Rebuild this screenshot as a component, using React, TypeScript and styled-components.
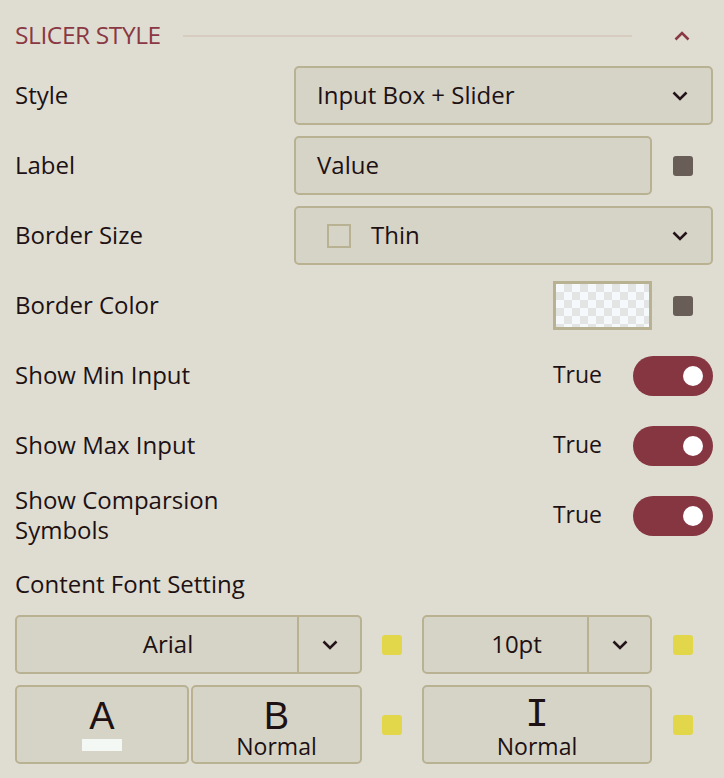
import React from 'react';
import styled, { createGlobalStyle } from 'styled-components';

const GlobalStyle = createGlobalStyle`
    html, body {
        margin: 0;
        padding: 0;
        background: #dfddd1;
    }
    body {
        font-family: "Open Sans", "Noto Sans", sans-serif;
        color: #1d1113;
    }
`;

const ChevronDown = () => (
    <svg width="16" height="10" viewBox="0 0 16 10">
        <path d="M1.5 1.5 L8 8 L14.5 1.5" fill="none" stroke="#24141a" strokeWidth="2.6" />
    </svg>
);

const ChevronUp = () => (
    <svg width="16" height="10" viewBox="0 0 16 10">
        <path d="M1.5 8.5 L8 2 L14.5 8.5" fill="none" stroke="#8a3843" strokeWidth="2.6" />
    </svg>
);

const Toggle = ({ on }: { on: boolean }) => (
    <ToggleTrack on={on}>
        <ToggleKnob />
    </ToggleTrack>
);

const App = () => {
    return (
        <>
            <GlobalStyle />
            <Panel>
                <Header>
                    <Title>SLICER STYLE</Title>
                    <Rule />
                    <CollapseButton>
                        <ChevronUp />
                    </CollapseButton>
                </Header>

                <Rows>
                    <Row>
                        <Label>Style</Label>
                        <Controls>
                            <Select>
                                <SelectValue>Input Box + Slider</SelectValue>
                                <ChevronDown />
                            </Select>
                        </Controls>
                    </Row>

                    <Row>
                        <Label>Label</Label>
                        <Controls>
                            <TextInput>Value</TextInput>
                            <SideSlot>
                                <ColorDot color="#695d57" />
                            </SideSlot>
                        </Controls>
                    </Row>

                    <Row>
                        <Label>Border Size</Label>
                        <Controls>
                            <Select>
                                <SelectValue>
                                    <BorderSample />
                                    Thin
                                </SelectValue>
                                <ChevronDown />
                            </Select>
                        </Controls>
                    </Row>

                    <Row>
                        <Label>Border Color</Label>
                        <Controls>
                            <Swatch />
                            <SideSlot>
                                <ColorDot color="#695d57" />
                            </SideSlot>
                        </Controls>
                    </Row>

                    <Row>
                        <Label>Show Min Input</Label>
                        <Controls>
                            <SwitchGroup>
                                <SwitchText>True</SwitchText>
                                <Toggle on />
                            </SwitchGroup>
                        </Controls>
                    </Row>

                    <Row>
                        <Label>Show Max Input</Label>
                        <Controls>
                            <SwitchGroup>
                                <SwitchText>True</SwitchText>
                                <Toggle on />
                            </SwitchGroup>
                        </Controls>
                    </Row>

                    <Row>
                        <Label>Show Comparsion Symbols</Label>
                        <Controls>
                            <SwitchGroup>
                                <SwitchText>True</SwitchText>
                                <Toggle on />
                            </SwitchGroup>
                        </Controls>
                    </Row>

                    <SectionLabel>Content Font Setting</SectionLabel>

                    <FontGrid>
                        <Combo>
                            <ComboValue>Arial</ComboValue>
                            <ComboArrow>
                                <ChevronDown />
                            </ComboArrow>
                        </Combo>
                        <DotSlot>
                            <ColorDot color="#e2d64a" />
                        </DotSlot>
                        <Combo>
                            <ComboValue>10pt</ComboValue>
                            <ComboArrow>
                                <ChevronDown />
                            </ComboArrow>
                        </Combo>
                        <DotSlot>
                            <ColorDot color="#e2d64a" />
                        </DotSlot>

                        <StylePair>
                            <StyleButton>
                                <Glyph>A</Glyph>
                                <ColorBar color="#f3f8f5" />
                            </StyleButton>
                            <StyleButton>
                                <Glyph>B</Glyph>
                                <StyleCaption>Normal</StyleCaption>
                            </StyleButton>
                        </StylePair>
                        <DotSlot>
                            <ColorDot color="#e2d64a" />
                        </DotSlot>
                        <StyleButton>
                            <Glyph serif>I</Glyph>
                            <StyleCaption>Normal</StyleCaption>
                        </StyleButton>
                        <DotSlot>
                            <ColorDot color="#e2d64a" />
                        </DotSlot>
                    </FontGrid>
                </Rows>
            </Panel>
        </>
    );
};

export default App;

const Panel = styled.div`
    width: 724px;
    min-height: 778px;
    box-sizing: border-box;
    padding: 5px 11px 0 15px;
    background: #dfddd1;
    font-size: 24px;
`;

const Header = styled.div`
    display: flex;
    align-items: center;
    height: 61px;
`;

const Title = styled.div`
    font-size: 24.5px;
    color: #8a3843;
    letter-spacing: -0.4px;
    white-space: nowrap;
    line-height: 1;
`;

const Rule = styled.div`
    flex: 1;
    height: 2px;
    background: #d6cdc0;
    margin: 0 35px 0 22px;
`;

const CollapseButton = styled.div`
    width: 30px;
    height: 30px;
    display: flex;
    align-items: center;
    justify-content: center;
    margin-right: 16px;
`;

const Rows = styled.div`
    display: flex;
    flex-direction: column;
    gap: 11px;
`;

const Row = styled.div`
    display: grid;
    grid-template-columns: 279px 1fr;
    align-items: center;
    min-height: 59px;
`;

const Label = styled.div`
    line-height: 30px;
    padding-right: 20px;
    margin-top: -2px;
`;

const SectionLabel = styled.div`
    height: 48px;
    box-sizing: border-box;
    padding-top: 8px;
    display: flex;
    align-items: center;
    line-height: 30px;
`;

const Controls = styled.div`
    display: flex;
    align-items: center;
    justify-content: flex-end;
    height: 59px;
`;

const boxBase = `
    box-sizing: border-box;
    height: 59px;
    border: 2px solid #b8b293;
    border-radius: 5px;
    background: #d6d4c7;
`;

const Select = styled.div`
    ${boxBase}
    flex: 1;
    display: flex;
    align-items: center;
    justify-content: space-between;
    padding: 0 23px 0 21px;
`;

const SelectValue = styled.div`
    display: flex;
    align-items: center;
    margin-top: -2px;
`;

const BorderSample = styled.span`
    box-sizing: border-box;
    width: 24px;
    height: 24px;
    border: 2px solid #b8b293;
    margin: 2px 20px 0 10px;
`;

const TextInput = styled.div`
    ${boxBase}
    flex: 1;
    display: flex;
    align-items: center;
    padding: 0 0 2px 21px;
`;

const SideSlot = styled.div`
    width: 61px;
    display: flex;
    justify-content: center;
`;

const ColorDot = styled.span<{ color: string }>`
    display: block;
    width: 20px;
    height: 20px;
    border-radius: 3px;
    background: ${props => props.color};
`;

const Swatch = styled.div`
    box-sizing: border-box;
    width: 99px;
    height: 49px;
    border: 3px solid #b8b293;
    background-color: #f6f9fb;
    background-image: repeating-conic-gradient(#e2e5e4 0% 25%, #f6f9fb 0% 50%);
    background-size: 16px 16px;
`;

const SwitchGroup = styled.div`
    display: flex;
    align-items: center;
    gap: 31px;
`;

const SwitchText = styled.span`
    font-size: 23px;
    margin-top: -3px;
`;

const ToggleTrack = styled.div<{ on: boolean }>`
    width: 80px;
    height: 40px;
    border-radius: 20px;
    background: ${props => (props.on ? '#853641' : '#b8b293')};
    display: flex;
    align-items: center;
    justify-content: ${props => (props.on ? 'flex-end' : 'flex-start')};
    padding: 0 10px;
    box-sizing: border-box;
`;

const ToggleKnob = styled.span`
    width: 20px;
    height: 20px;
    border-radius: 50%;
    background: #ffffff;
`;

const FontGrid = styled.div`
    display: grid;
    grid-template-columns: 347px 60px 230px 61px;
    grid-template-rows: 59px 79px;
    row-gap: 11px;
    align-items: center;
`;

const Combo = styled.div`
    ${boxBase}
    display: flex;
    align-items: stretch;
`;

const ComboValue = styled.div`
    flex: 1;
    display: flex;
    align-items: center;
    justify-content: center;
    padding: 0 0 2px 22px;
`;

const ComboArrow = styled.div`
    width: 61px;
    border-left: 2px solid #b8b293;
    display: flex;
    align-items: center;
    justify-content: center;
`;

const DotSlot = styled.div`
    display: flex;
    justify-content: center;
`;

const StylePair = styled.div`
    display: grid;
    grid-template-columns: 174px 1fr;
    gap: 2px;
    height: 79px;
`;

const StyleButton = styled.div`
    ${boxBase}
    height: 79px;
    display: flex;
    flex-direction: column;
    align-items: center;
    padding-top: 11px;
`;

const Glyph = styled.div<{ serif?: boolean }>`
    font-family: ${props => (props.serif ? '"Liberation Mono", monospace' : '"Liberation Sans", Arial, sans-serif')};
    font-size: ${props => (props.serif ? '40px' : '38px')};
    line-height: 36px;
    height: 36px;
`;

const StyleCaption = styled.div`
    font-size: 23px;
    line-height: 24px;
`;

const ColorBar = styled.div<{ color: string }>`
    width: 40px;
    height: 12px;
    margin-top: 5px;
    background: ${props => props.color};
`;
